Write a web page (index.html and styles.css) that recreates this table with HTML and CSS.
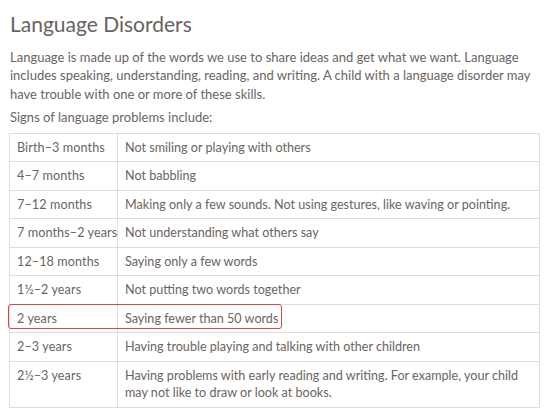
FILE: index.html
```html
<!DOCTYPE html>
<html>
<head>
<meta charset="utf-8">
<link rel="stylesheet" href="styles.css">
</head>
<body>
<div class="page">
  <h1 class="title">Language Disorders</h1>
  <p class="intro">Language is made up of the words we use to share ideas and get what we want. Language includes speaking, understanding, reading, and writing. A child with a language disorder may have trouble with one or more of these skills.</p>
  <p class="lead">Signs of language problems include:</p>
  <div class="table-wrap">
    <table class="signs">
      <colgroup><col class="col-age"><col class="col-sign"></colgroup>
      <tr><td class="age">Birth–3 months</td><td>Not smiling or playing with others</td></tr>
      <tr><td class="age">4–7 months</td><td>Not babbling</td></tr>
      <tr><td class="age">7–12 months</td><td>Making only a few sounds. Not using gestures, like waving or pointing.</td></tr>
      <tr><td class="age">7 months–2 years</td><td>Not understanding what others say</td></tr>
      <tr><td class="age">12–18 months</td><td>Saying only a few words</td></tr>
      <tr><td class="age">1½–2 years</td><td>Not putting two words together</td></tr>
      <tr class="marked"><td class="age">2 years</td><td>Saying fewer than 50 words</td></tr>
      <tr><td class="age">2–3 years</td><td>Having trouble playing and talking with other children</td></tr>
      <tr><td class="age">2½–3 years</td><td>Having problems with early reading and writing. For example, your child may not like to draw or look at books.</td></tr>
    </table>
    <div class="highlight"></div>
  </div>
</div>
</body>
</html>
```
FILE: styles.css
```css
html, body {
  margin: 0;
  padding: 0;
  background: #ffffff;
}
body {
  font-family: Lato, "Open Sans", sans-serif;
  color: #6b6461;
}
.page {
  padding: 11px 8px 0 9px;
}
.title {
  margin: 0 0 0 1px;
  font-size: 21px;
  font-weight: 400;
  line-height: 26px;
  color: #6a625e;
}
.intro {
  margin: 11px 0 0 1px;
  font-size: 13px;
  line-height: 18.3px;
}
.lead {
  margin: 5px 0 0 1px;
  font-size: 13px;
  line-height: 18px;
}
.table-wrap {
  position: relative;
  margin-top: 7px;
}
.signs {
  width: 531px;
  table-layout: fixed;
  border-collapse: collapse;
  font-size: 12.6px;
}
.col-age {
  width: 108px;
}
.signs td {
  border: 1px solid #e0dedc;
  padding: 5px 6px 5px 7px;
  line-height: 17.5px;
  vertical-align: top;
}
.signs td.age {
  white-space: nowrap;
  letter-spacing: 0.1px;
}
.highlight {
  position: absolute;
  left: -1px;
  top: 171px;
  width: 272px;
  height: 23px;
  border: 1.5px solid #d0484a;
  border-radius: 3px;
}
```
